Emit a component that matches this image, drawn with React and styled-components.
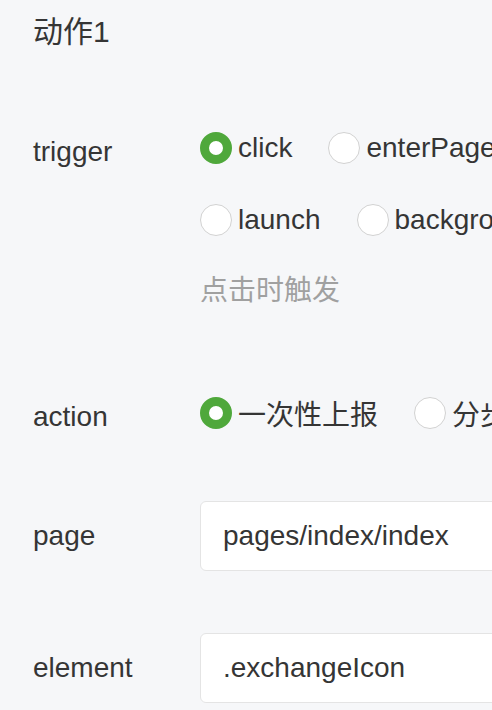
import React, { useState } from "react";
import styled, { createGlobalStyle } from "styled-components";

const GlobalStyle = createGlobalStyle`
  html, body {
    margin: 0;
    padding: 0;
    overflow: hidden;
    background: #f6f7f9;
  }
  body {
    font-family: "Liberation Sans", "Noto Sans CJK SC", sans-serif;
    color: #353535;
  }
`;

const Page = styled.div`
  padding: 12px 0 0 33px;
  width: 700px;
`;

const Title = styled.div`
  font-size: 30px;
  line-height: 40px;
  margin-bottom: 76px;
`;

const FormItem = styled.div`
  display: grid;
  grid-template-columns: 167px 1fr;
  margin-bottom: ${(p) => p.$mb || 0}px;
`;

const Label = styled.div`
  font-size: 28px;
  line-height: ${(p) => p.$lh || 40}px;
  padding-top: ${(p) => p.$pt || 0}px;
`;

const RadioRows = styled.div`
  display: flex;
  flex-direction: column;
  gap: 32px;
`;

const RadioRow = styled.div`
  display: flex;
  flex-wrap: nowrap;
  gap: 36px;
`;

const Option = styled.label`
  display: flex;
  align-items: center;
  gap: 6px;
  height: 40px;
  font-size: 28px;
  white-space: nowrap;
  cursor: pointer;
`;

const Dot = styled.span`
  box-sizing: border-box;
  width: 32px;
  height: 32px;
  border-radius: 50%;
  flex-shrink: 0;
  background: #fff;
  border: ${(p) => (p.$on ? "9px solid #4fa83b" : "1.5px solid #d2d2d2")};
`;

const Hint = styled.div`
  margin-top: 31px;
  font-size: 28px;
  line-height: 40px;
  color: #a0a0a0;
`;

const Input = styled.input`
  box-sizing: border-box;
  width: 420px;
  height: 70px;
  padding: 0 22px;
  border: 1px solid #e4e4e4;
  border-radius: 6px;
  background: #fff;
  font-family: "Liberation Sans", "Noto Sans CJK SC", sans-serif;
  font-size: 28px;
  color: #353535;
  outline: none;
`;

const Radio = ({ on, text, onPick }) => (
  <Option onClick={onPick}>
    <Dot $on={on} />
    {text}
  </Option>
);

const App = () => {
  const [trigger, setTrigger] = useState("click");
  const [action, setAction] = useState("once");
  const [page, setPage] = useState("pages/index/index");
  const [element, setElement] = useState(".exchangeIcon");

  const triggerRows = [
    ["click", "enterPage"],
    ["launch", "background"],
  ];

  return (
    <>
      <GlobalStyle />
      <Page>
        <Title>动作1</Title>

        <FormItem $mb={82}>
          <Label $pt={4}>trigger</Label>
          <div>
            <RadioRows>
              {triggerRows.map((row, i) => (
                <RadioRow key={i}>
                  {row.map((t) => (
                    <Radio
                      key={t}
                      text={t}
                      on={trigger === t}
                      onPick={() => setTrigger(t)}
                    />
                  ))}
                </RadioRow>
              ))}
            </RadioRows>
            <Hint>点击时触发</Hint>
          </div>
        </FormItem>

        <FormItem $mb={64}>
          <Label $pt={4}>action</Label>
          <RadioRow>
            <Radio
              text="一次性上报"
              on={action === "once"}
              onPick={() => setAction("once")}
            />
            <Radio
              text="分步上报"
              on={action === "step"}
              onPick={() => setAction("step")}
            />
          </RadioRow>
        </FormItem>

        <FormItem $mb={62}>
          <Label $lh={70}>page</Label>
          <Input value={page} onChange={(e) => setPage(e.target.value)} />
        </FormItem>

        <FormItem>
          <Label $lh={70}>element</Label>
          <Input value={element} onChange={(e) => setElement(e.target.value)} />
        </FormItem>
      </Page>
    </>
  );
};

export default App;
